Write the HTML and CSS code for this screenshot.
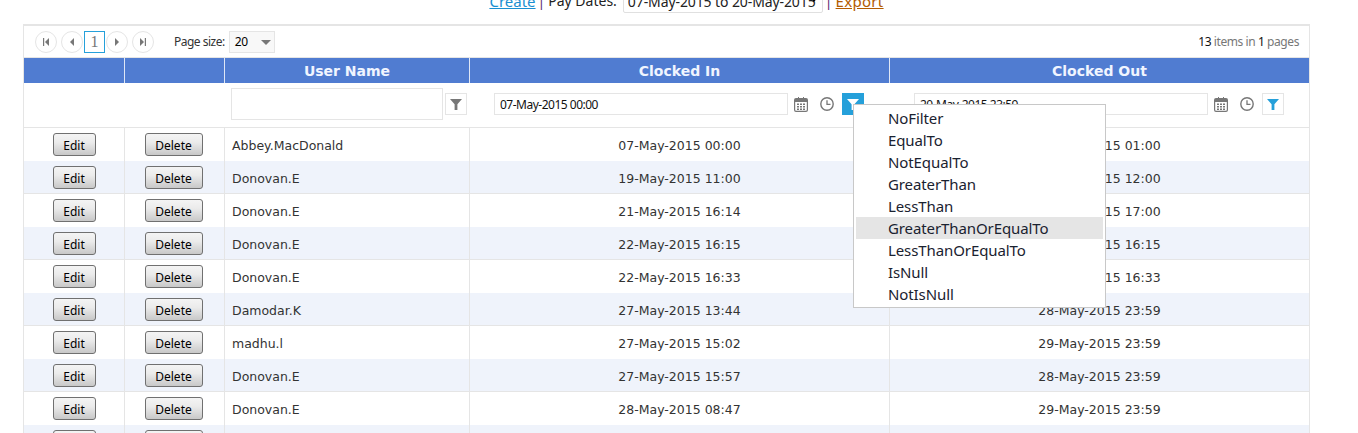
FILE: index.html
```html
<!DOCTYPE html>
<html lang="en">
<head>
<meta charset="utf-8">
<title>Time Clock</title>
<link rel="stylesheet" href="styles.css">
</head>
<body>
<svg class="defs" width="0" height="0" aria-hidden="true">
  <symbol id="funnel" viewBox="0 0 12 12"><path d="M0 1h12L7.400 6.200V12H4.600V6.200z"/></symbol>
  <symbol id="cal" viewBox="0 0 14 15"><path fill-rule="evenodd" d="M2 1h2V0h1v1h4V0h1v1h2a2 2 0 0 1 2 2v10a2 2 0 0 1-2 2H2a2 2 0 0 1-2-2V3a2 2 0 0 1 2-2zM1.200 5v8a.8.8 0 0 0 .8.800h10a.8.8 0 0 0 .8-.8V5z"/><path d="M3 6.500h2v1.500H3zM6 6.500h2v1.500H6zM9 6.500h2v1.500H9zM3 9h2v1.500H3zM6 9h2v1.500H6zM9 9h2v1.500H9zM3 11.500h2V13H3zM6 11.500h2V13H6zM9 11.500h2V13H9z"/></symbol>
  <symbol id="clock" viewBox="0 0 14 14"><circle cx="7" cy="7" r="6.200" fill="none" stroke="currentColor" stroke-width="1.400"/><path d="M7 3.200V7.300H10.500" fill="none" stroke="currentColor" stroke-width="1.300"/></symbol>
</svg>

<div class="topbar">
  <div class="topbar-inner">
    <a class="link-create" href="#">Create</a>
    <span class="sep">|</span>
    <span class="pay-label">Pay Dates:</span>
    <span class="date-select">
      <select><option>07-May-2015 to 20-May-2015</option></select>
    </span>
    <span class="sep">|</span>
    <a class="link-export" href="#">Export</a>
  </div>
</div>

<div class="grid">
  <div class="pager">
    <div class="pager-left">
      <div class="pager-nav">
        <span class="pg pg-gap"><svg width="8" height="8" viewBox="0 0 8 8"><path d="M1 0h1.200v8H1zM7 0v8L3 4z"/></svg></span>
        <span class="pg"><svg width="8" height="8" viewBox="0 0 8 8"><path d="M6 0v8L2 4z"/></svg></span>
        <span class="pg-current">1</span>
        <span class="pg pg-gap"><svg width="8" height="8" viewBox="0 0 8 8"><path d="M2 0v8l4-4z"/></svg></span>
        <span class="pg"><svg width="8" height="8" viewBox="0 0 8 8"><path d="M1 0v8l4-4zM5.800 0H7v8H5.800z"/></svg></span>
      </div>
      <span class="page-size-label">Page size:</span>
      <span class="page-size"><span>20</span><i class="caret"></i></span>
    </div>
    <div class="pager-info"><b>13</b> items in <b>1</b> pages</div>
  </div>

  <table class="data">
    <colgroup>
      <col class="c1"><col class="c2"><col class="c3"><col class="c4"><col class="c5">
    </colgroup>
    <thead>
      <tr class="head"><th></th><th></th><th>User Name</th><th>Clocked In</th><th>Clocked Out</th></tr>
      <tr class="filters">
        <td></td>
        <td></td>
        <td>
          <div class="filter-cell filter-user">
            <input class="name-input" type="text">
            <span class="fbtn fbtn-gray"><svg width="12" height="12"><use href="#funnel"/></svg></span>
          </div>
        </td>
        <td>
          <div class="filter-cell filter-date">
            <input class="date-input" type="text" value="07-May-2015 00:00">
            <svg class="ic-cal" width="14" height="15"><use href="#cal"/></svg>
            <svg class="ic-clock" width="14" height="14"><use href="#clock"/></svg>
            <span class="fbtn fbtn-active"><svg width="12" height="12"><use href="#funnel"/></svg></span>
          </div>
        </td>
        <td>
          <div class="filter-cell filter-date">
            <input class="date-input" type="text" value="20-May-2015 23:59">
            <svg class="ic-cal" width="14" height="15"><use href="#cal"/></svg>
            <svg class="ic-clock" width="14" height="14"><use href="#clock"/></svg>
            <span class="fbtn fbtn-blue"><svg width="12" height="12"><use href="#funnel"/></svg></span>
          </div>
        </td>
      </tr>
    </thead>
    <tbody>
      <tr><td class="act"><button class="btn btn-edit">Edit</button></td><td class="act"><button class="btn btn-del">Delete</button></td><td class="name">Abbey.MacDonald</td><td class="dt">07-May-2015 00:00</td><td class="dt">07-May-2015 01:00</td></tr>
      <tr class="alt"><td class="act"><button class="btn btn-edit">Edit</button></td><td class="act"><button class="btn btn-del">Delete</button></td><td class="name">Donovan.E</td><td class="dt">19-May-2015 11:00</td><td class="dt">19-May-2015 12:00</td></tr>
      <tr><td class="act"><button class="btn btn-edit">Edit</button></td><td class="act"><button class="btn btn-del">Delete</button></td><td class="name">Donovan.E</td><td class="dt">21-May-2015 16:14</td><td class="dt">21-May-2015 17:00</td></tr>
      <tr class="alt"><td class="act"><button class="btn btn-edit">Edit</button></td><td class="act"><button class="btn btn-del">Delete</button></td><td class="name">Donovan.E</td><td class="dt">22-May-2015 16:15</td><td class="dt">22-May-2015 16:15</td></tr>
      <tr><td class="act"><button class="btn btn-edit">Edit</button></td><td class="act"><button class="btn btn-del">Delete</button></td><td class="name">Donovan.E</td><td class="dt">22-May-2015 16:33</td><td class="dt">22-May-2015 16:33</td></tr>
      <tr class="alt"><td class="act"><button class="btn btn-edit">Edit</button></td><td class="act"><button class="btn btn-del">Delete</button></td><td class="name">Damodar.K</td><td class="dt">27-May-2015 13:44</td><td class="dt">28-May-2015 23:59</td></tr>
      <tr><td class="act"><button class="btn btn-edit">Edit</button></td><td class="act"><button class="btn btn-del">Delete</button></td><td class="name">madhu.l</td><td class="dt">27-May-2015 15:02</td><td class="dt">29-May-2015 23:59</td></tr>
      <tr class="alt"><td class="act"><button class="btn btn-edit">Edit</button></td><td class="act"><button class="btn btn-del">Delete</button></td><td class="name">Donovan.E</td><td class="dt">27-May-2015 15:57</td><td class="dt">28-May-2015 23:59</td></tr>
      <tr><td class="act"><button class="btn btn-edit">Edit</button></td><td class="act"><button class="btn btn-del">Delete</button></td><td class="name">Donovan.E</td><td class="dt">28-May-2015 08:47</td><td class="dt">29-May-2015 23:59</td></tr>
      <tr class="alt"><td class="act"><button class="btn btn-edit">Edit</button></td><td class="act"><button class="btn btn-del">Delete</button></td><td class="name"></td><td class="dt"></td><td class="dt"></td></tr>
    </tbody>
  </table>
</div>

<ul class="menu">
  <li>NoFilter</li>
  <li>EqualTo</li>
  <li>NotEqualTo</li>
  <li>GreaterThan</li>
  <li>LessThan</li>
  <li class="hover">GreaterThanOrEqualTo</li>
  <li>LessThanOrEqualTo</li>
  <li>IsNull</li>
  <li>NotIsNull</li>
</ul>
</body>
</html>
```
FILE: styles.css
```css
html, body { margin: 0; padding: 0; height: 433px; overflow: hidden; background: #fff; }
body { position: relative; font-family: "Noto Sans", sans-serif; color: #222; }
.defs { position: absolute; }

.topbar { height: 13px; padding-bottom: 11px; display: flex; justify-content: center; align-items: flex-end; overflow: hidden; font-size: 15px; }
.topbar-inner { display: flex; align-items: flex-end; flex: none; height: 40px; padding-left: 15px; }
.topbar-inner > * { line-height: 20px; margin-bottom: 2px; }
.link-create { color: #1a8fd1; }
.link-export { color: #b35c00; letter-spacing: .3px; }
.pay-label { font-size: 14px; }
.sep { color: #5c2a72; margin: 0 3px 2px 2px; font-size: 14px; }
.date-select { margin: 0 0 0 6px; position: relative; display: block; height: 24px; line-height: 24px; }
.topbar-inner > .date-select { margin-bottom: 0; }
.date-select select { appearance: none; display: block; width: 200px; height: 24px; border: 1px solid #e0e0e0; border-radius: 2px; background: #fff; padding: 0 0 0 4px; font: 14px "Noto Sans", sans-serif; letter-spacing: -.1px; color: #222; }
.date-select::after { content: ""; position: absolute; right: 5px; top: 8px; border: 4px solid transparent; border-top: 5px solid #000; }

.grid { margin-left: 23px; width: 1285px; border: 1px solid #e5e5e5; border-top-width: 2px; }
.pager { height: 31px; display: flex; justify-content: space-between; align-items: center; padding: 0 10px 0 11px; border-bottom: 1px solid #e5e5e5; font-size: 12px; }
.pager-left { display: flex; align-items: center; }
.pager-nav { display: flex; align-items: center; }
.pg { width: 20px; height: 20px; border: 1px solid #e5e5e5; border-radius: 50%; display: flex; align-items: center; justify-content: center; }
.pg svg { fill: #777; }
.pg-gap { margin-right: 4px; }
.pg-current { width: 19px; height: 19px; margin: 0 1px; padding-top: 1px; border: 1px solid #25a0da; display: flex; align-items: center; justify-content: center; font-size: 16px; color: #777; font-family: "Liberation Serif", serif; }
.page-size-label { margin-left: 20px; color: #333; letter-spacing: -.5px; }
.page-size { margin-left: 4px; width: 44px; height: 20px; border: 1px solid #e5e5e5; background: #f8f8f8; display: flex; align-items: center; justify-content: space-between; color: #000; letter-spacing: -.3px; }
.page-size span { margin-left: 5px; }
.caret { margin-right: 3px; margin-top: 1px; border: 5px solid transparent; border-top: 5px solid #777; border-bottom: 0; }
.pager-info { color: #777; letter-spacing: -.42px; }
.pager-info b { font-weight: 400; color: #111; }

.data { width: 1285px; table-layout: fixed; border-collapse: separate; border-spacing: 0; font-family: "DejaVu Sans", sans-serif; font-size: 12.500px; color: #333; }
.c1 { width: 101px; } .c2 { width: 100px; } .c3 { width: 245px; } .c4 { width: 420px; } .c5 { width: 419px; }
.head th { height: 25px; padding: 0; background: #507cd1; color: #f0f5ff; font-size: 14px; font-weight: 700; text-align: center; border-right: 1px solid #dfe7f6; box-sizing: border-box; }
.head th:last-child { border-right: 0; }
.filters td { height: 45px; padding: 0 0 2px; box-sizing: border-box; border-bottom: 1px solid #e5e5e5; }
.filter-cell { display: flex; align-items: center; }
.filter-user { padding-left: 6px; }
.filter-date { padding-left: 24px; }
.name-input { width: 212px; height: 32px; box-sizing: border-box; border: 1px solid #e5e5e5; background: #fff; padding: 0; margin: 0; }
.date-input { width: 294px; height: 22px; box-sizing: border-box; border: 1px solid #e5e5e5; padding: 0 5px; margin: 0; font: 12px "Noto Sans", sans-serif; letter-spacing: -.5px; color: #111; background: #fff; }
.ic-cal { margin-left: 6px; fill: #777; flex: none; }
.ic-clock { margin-left: 12px; color: #777; fill: none; flex: none; }
.fbtn { width: 22px; height: 22px; box-sizing: border-box; display: flex; align-items: center; justify-content: center; flex: none; }
.filter-date .fbtn { margin-left: 8px; }
.filter-user .fbtn { margin-left: 2px; }
.fbtn-gray { border: 1px solid #e5e5e5; fill: #777; }
.fbtn-active { background: #25a0da; fill: #fff; }
.fbtn-blue { border: 1px solid #e5e5e5; fill: #25a0da; }

tbody td { height: 33px; padding: 0; box-sizing: border-box; border-right: 1px solid #e5e5e5; }
tbody td:last-child { border-right: 0; }
tbody tr.alt td { background: #eff3fb; border-bottom: 1px solid #e5e5e5; }
.act { text-align: center; }
.act:nth-child(2) { padding-right: 2px; }
tbody .name { padding: 2px 0 0 7px; }
tbody .dt { padding-top: 2px; text-align: center; }

.btn { display: inline-block; box-sizing: border-box; height: 23px; padding: 2px 0 0; margin: 0; vertical-align: middle; border: 1px solid #707070; border-radius: 3px; background: linear-gradient(#f4f4f4, #ebebeb 40%, #c8c8c8); font: 12px "Noto Sans", sans-serif; color: #000; }
.btn-edit { width: 43px; }
.btn-del { width: 58px; }

.menu { position: absolute; left: 853px; top: 104px; width: 253px; height: 204px; margin: 0; padding: 2px 2px 0 2px; box-sizing: border-box; list-style: none; background: #fff; border: 1px solid #c8c8c8; font-size: 15px; letter-spacing: -.1px; color: #1a2230; }
.menu li { height: 22px; line-height: 22px; padding-left: 32px; }
.menu .hover { background: #e5e5e5; }
```
